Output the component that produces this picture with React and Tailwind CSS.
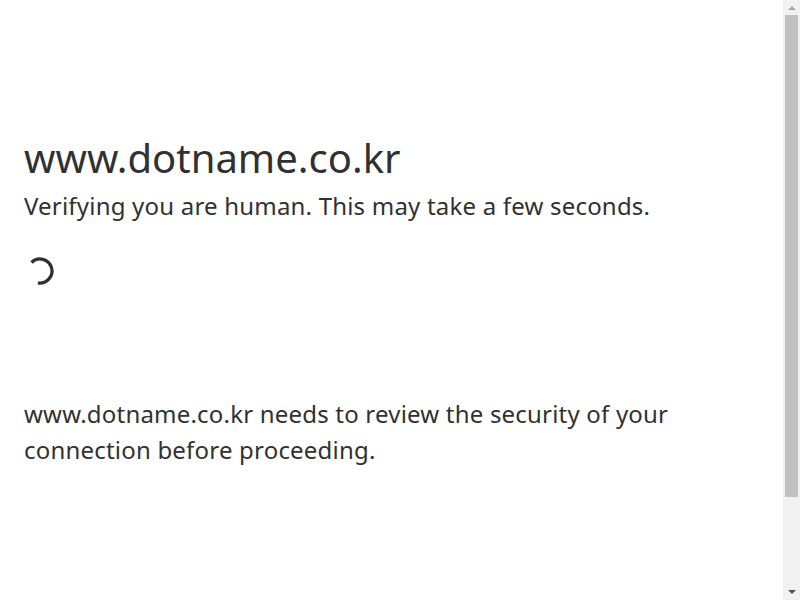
export default function App() {
  return (
    <div className="h-screen overflow-hidden flex bg-white text-[#313131] font-['Noto_Sans',sans-serif]">
      {/* Page content */}
      <div className="flex-1 pl-6 pt-32">
        <h1 className="text-[40px] leading-[60px] font-normal">www.dotname.co.kr</h1>
        <h2 className="text-[24px] leading-[36px] font-normal tracking-[0.2px]">
          Verifying you are human. This may take a few seconds.
        </h2>
        <div className="mt-[31px]">
          <svg width="32" height="32" viewBox="0 0 32 32">
            <path
              d="M7.5 7.5 A12 12 0 1 1 13.9 27.8"
              fill="none"
              stroke="#313131"
              strokeWidth="3.2"
            />
          </svg>
        </div>
        <p className="mt-[109px] text-[24px] leading-[36px] tracking-[0.2px]">
          www.dotname.co.kr needs to review the security of your
          <br />
          connection before proceeding.
        </p>
      </div>

      {/* Scrollbar */}
      <div className="w-[17px] bg-[#f1f1f1] flex flex-col items-center">
        <div className="h-[15px] flex items-center justify-center">
          <div className="w-0 h-0 border-l-[4px] border-r-[4px] border-b-[4px] border-l-transparent border-r-transparent border-b-[#a3a3a3]" />
        </div>
        <div className="w-[13px] h-[482px] bg-[#c1c1c1]" />
        <div className="flex-1" />
        <div className="h-[17px] flex items-center justify-center">
          <div className="w-0 h-0 border-l-[4px] border-r-[4px] border-t-[4px] border-l-transparent border-r-transparent border-t-[#505050]" />
        </div>
      </div>
    </div>
  );
}
